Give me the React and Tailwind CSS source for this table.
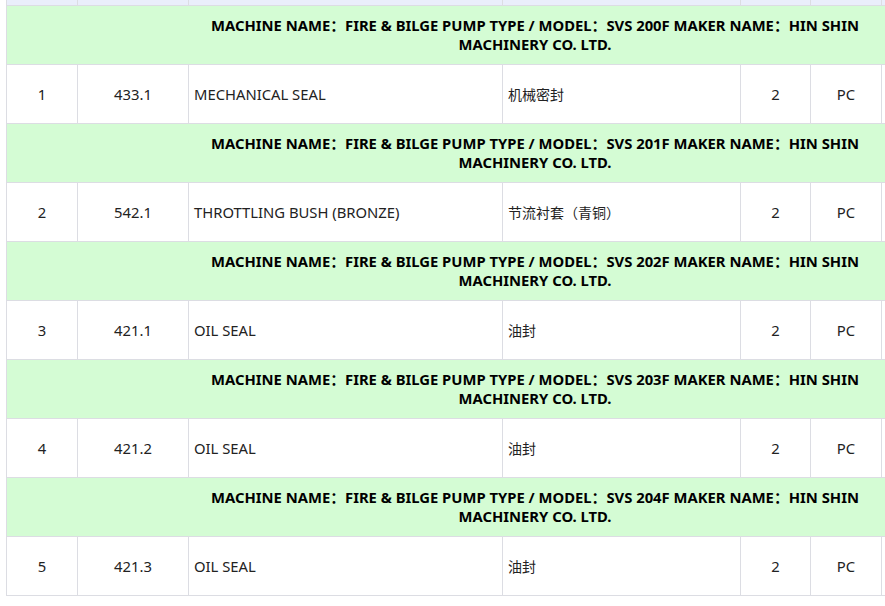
import React from "react";

const groups = [
  { model: "SVS 200F", no: "1", code: "433.1", en: "MECHANICAL SEAL", cn: "机械密封" },
  { model: "SVS 201F", no: "2", code: "542.1", en: "THROTTLING BUSH (BRONZE)", cn: "节流衬套（青铜）" },
  { model: "SVS 202F", no: "3", code: "421.1", en: "OIL SEAL", cn: "油封" },
  { model: "SVS 203F", no: "4", code: "421.2", en: "OIL SEAL", cn: "油封" },
  { model: "SVS 204F", no: "5", code: "421.3", en: "OIL SEAL", cn: "油封" },
];

const grid = "grid grid-cols-[71px_111px_314px_238px_70px_71px_120px]";
const cell = "border-r border-[#dcdde3]";

export default function App() {
  return (
    <div
      className="w-[885px] h-[606px] overflow-hidden bg-white"
      style={{ fontFamily: '"Noto Sans", "Noto Sans CJK SC", sans-serif' }}
    >
      <div className="ml-[6px] w-[1000px] border-l border-[#dcdde3]">
        <div className={`${grid} h-[6px] bg-[#eaeefb] border-b border-[#dcdde3]`}>
          <div className={cell} />
          <div className={cell} />
          <div className={cell} />
          <div className={cell} />
          <div className={cell} />
          <div className={cell} />
          <div />
        </div>
        {groups.map((g) => (
          <React.Fragment key={g.no}>
            <div className="h-[59px] bg-[#d4fcd4] border-b border-[#dcdde3] flex items-center">
              <div className="ml-[178px] w-[700px] text-center text-[14.8px] leading-[19px] font-bold text-black">
                {`MACHINE NAME：FIRE & BILGE PUMP TYPE / MODEL：${g.model} MAKER NAME：HIN SHIN MACHINERY CO. LTD.`}
              </div>
            </div>
            <div className={`${grid} h-[59px] border-b border-[#dcdde3] text-[14.8px] text-[#222]`}>
              <div className={`${cell} flex items-center justify-center`}>{g.no}</div>
              <div className={`${cell} flex items-center justify-center`}>{g.code}</div>
              <div className={`${cell} flex items-center px-[5px]`}>{g.en}</div>
              <div className={`${cell} flex items-center px-[5px] text-[14px]`}>{g.cn}</div>
              <div className={`${cell} flex items-center justify-center`}>2</div>
              <div className={`${cell} flex items-center justify-center`}>PC</div>
              <div />
            </div>
          </React.Fragment>
        ))}
      </div>
    </div>
  );
}
